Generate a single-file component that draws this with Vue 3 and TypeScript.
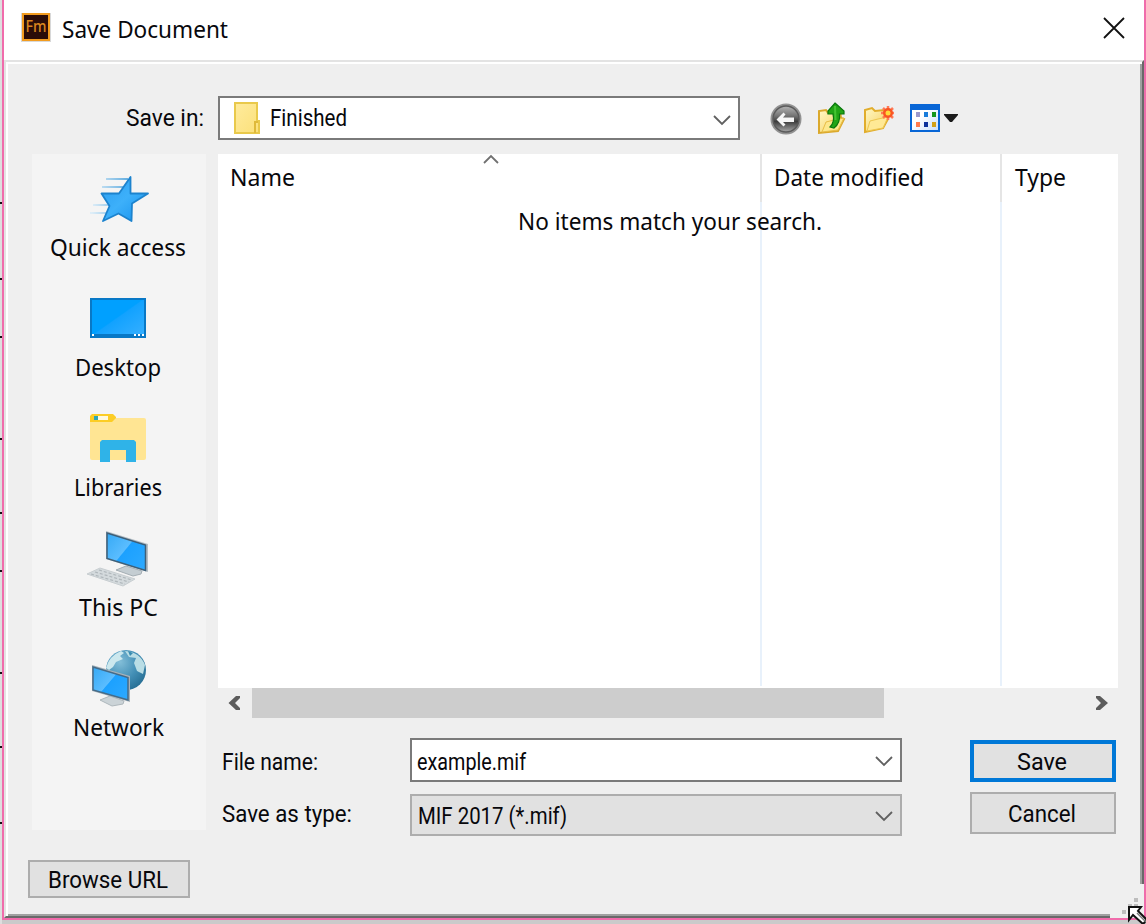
<script setup lang="ts">
import { h, ref } from 'vue'

interface LabelProps {
  text: string
  width: number
}

// Single line of text fitted to a given width, baseline 24px below its top
const Label = (props: LabelProps) =>
  h('svg', { class: 'label', width: props.width, height: 32 }, [
    h('text', { x: 0, y: 24, textLength: props.width, lengthAdjust: 'spacingAndGlyphs' }, props.text),
  ])
Label.props = ['text', 'width']

const places = [
  { id: 'quick', name: 'Quick access', width: 136 },
  { id: 'desktop', name: 'Desktop', width: 86 },
  { id: 'libraries', name: 'Libraries', width: 88 },
  { id: 'pc', name: 'This PC', width: 79 },
  { id: 'network', name: 'Network', width: 91 },
]

const columns = [
  { name: 'Name', width: 65, sorted: true },
  { name: 'Date modified', width: 150, sorted: false },
  { name: 'Type', width: 51, sorted: false },
]

const ticks = [202, 278, 336, 438, 512, 570, 672, 746, 822]
const folder = ref('Finished')
const fileName = ref('example.mif')
const fileType = ref('MIF 2017 (*.mif)')
</script>

<template>
  <div class="screen">
    <svg class="edge" width="2" height="924">
      <rect v-for="y in ticks" :key="y" x="0" :y="y" width="2" height="2" fill="#111" />
    </svg>
    <div class="dialog">
      <header class="titlebar">
        <svg class="app-icon" width="32" height="32" viewBox="0 0 32 32">
          <rect x="0" y="1" width="30" height="29" fill="#d8d8d8" />
          <rect x="1" y="1" width="28" height="28" fill="#f29c1f" />
          <rect x="3" y="3" width="24" height="24" fill="#2b0d08" />
          <text x="4.500" y="20" textLength="21" lengthAdjust="spacingAndGlyphs" class="app-letters">Fm</text>
        </svg>
        <Label class="wide" text="Save Document" :width="166" />
        <button class="close" aria-label="Close">
          <svg width="22" height="22" viewBox="0 0 22 22"><path d="M1 1 21 21M21 1 1 21" stroke="#111" stroke-width="1.8" fill="none" /></svg>
        </button>
      </header>

      <div class="client">
        <div class="toolbar">
          <div class="save-in"><Label text="Save in:" :width="78" /></div>
          <div class="combo folder-combo">
            <svg width="28" height="34" viewBox="0 0 28 34">
              <defs><linearGradient id="fold" x2="1" y2="1"><stop stop-color="#ffeb9c" /><stop offset="1" stop-color="#fbe07a" /></linearGradient></defs>
              <path d="M1 1H23V19H25V31H1Z" fill="url(#fold)" stroke="#e9c94b" stroke-width="2" />
              <path d="M21 31V20H24" fill="none" stroke="#dfb93a" stroke-width="2" />
            </svg>
            <Label :text="folder" :width="77" />
            <svg class="chevron" width="18" height="12" viewBox="0 0 18 12"><path d="M1 2 9 10 17 2" /></svg>
          </div>
          <div class="tools">
            <svg width="32" height="34" viewBox="0 0 32 34">
              <defs>
                <linearGradient id="ball" x2="0" y2="1"><stop stop-color="#b4b4b4" /><stop offset=".38" stop-color="#747474" /><stop offset=".6" stop-color="#3d3d3d" /><stop offset="1" stop-color="#a8a8a8" /></linearGradient>
              </defs>
              <circle cx="16" cy="17" r="15.5" fill="#929292" />
              <circle cx="16" cy="17" r="13" fill="url(#ball)" stroke="#5b5b5b" stroke-width="1.5" />
              <path d="M6.5 17.5 13.5 10.5 15.5 12.5 13 15.5H24V20H13L15.5 22.5 13.5 24.5Z" fill="#f6f6f6" />
            </svg>
            <svg class="up" width="28" height="34" viewBox="0 0 28 34">
              <defs><linearGradient id="paper" x2="1" y2="1"><stop stop-color="#fff8c8" /><stop offset="1" stop-color="#f5cd55" /></linearGradient></defs>
              <path d="M1 31V9L8 8 10 11 22 9 23 16 26 17 20 29Z" fill="url(#paper)" stroke="#dba92c" stroke-width="2" />
              <path d="M4 30 8 20 16 18 26 16 20 28Z" fill="#fde88d" stroke="#e8bd47" />
              <path d="M17 1 26 9 26 12H21.500Q22.500 21 16 26L12 25Q17 20 15 12H10V9Z" fill="#22a516" stroke="#08770c" stroke-width="1.2" />
              <path d="M17 4 17.500 18" stroke="#45c433" stroke-width="2" />
            </svg>
            <svg class="new" width="30" height="34" viewBox="0 0 30 34">
              <path d="M1 30V8L8 6 11 9 20 8 22 15 24 17 19 26Z" fill="url(#paper)" stroke="#e1ad2c" stroke-width="2" />
              <path d="M3 29 6 19 14 17 24 15 19 26Z" fill="#ffe995" stroke="#edc64f" />
              <path d="M24 4V18M17 11H31M19 6 29 16M29 6 19 16" stroke="#ff7956" stroke-width="2.500" />
              <circle cx="24" cy="11" r="5" fill="#f95522" /><circle cx="24" cy="11" r="2.500" fill="#ffd93b" />
            </svg>
            <svg class="view" width="30" height="34" viewBox="0 0 30 34">
              <defs><linearGradient id="win" x2="1" y2="1"><stop offset=".4" stop-color="#fff" /><stop offset="1" stop-color="#c3dbfb" /></linearGradient></defs>
              <path d="M1 3H29V29H1Z" fill="url(#win)" stroke="#0866d6" stroke-width="2" />
              <path d="M0 4 2 2H28L30 4V8H0Z" fill="#0866d6" />
              <path d="M6 10h4v5H6z" fill="#9b99cc" /><path d="M14 10h4v5h-4z" fill="#187cda" /><path d="M22 10h4v5h-4z" fill="#16971c" />
              <path d="M6 20h4v5H6z" fill="#ff7a4c" /><path d="M14 20h4v5h-4z" fill="#0b319c" /><path d="M22 20h4v5h-4z" fill="#d1a018" />
            </svg>
            <svg class="drop" width="14" height="8" viewBox="0 0 14 8"><path d="M0 0H14V1L8 8H6L0 1Z" fill="#1b1b1b" /></svg>
          </div>
        </div>

        <div class="content">
          <nav class="places">
            <div v-for="p in places" :key="p.id" class="place">
              <svg v-if="p.id === 'quick'" width="64" height="64" viewBox="0 0 64 64">
                <defs>
                  <linearGradient id="star" x2="1" y2="1"><stop stop-color="#2a9df0" /><stop offset=".5" stop-color="#3db0fa" /><stop offset="1" stop-color="#1590ec" /></linearGradient>
                  <linearGradient id="trail" gradientUnits="userSpaceOnUse" x1="6" y1="0" x2="40" y2="0"><stop stop-color="#d6ebf8" /><stop offset="1" stop-color="#3f9cdb" /></linearGradient>
                </defs>
                <path d="M20 11H42M16 19H37M7 37H25M4 45H22" stroke="url(#trail)" stroke-width="1.600" />
                <path d="M44.500 9V25.500H62L46 35.500 45.500 53 32.500 45.500 17 53 23.500 38 15.500 25.500H33Z" fill="url(#star)" stroke="#1c83ce" stroke-width="1.800" stroke-linejoin="round" />
              </svg>
              <svg v-else-if="p.id === 'desktop'" width="64" height="64" viewBox="0 0 64 64">
                <defs><linearGradient id="desk" x2="1" y2="1"><stop offset=".48" stop-color="#00a0ff" /><stop offset=".5" stop-color="#12a2ff" /><stop offset="1" stop-color="#38b0ff" /></linearGradient></defs>
                <rect x="5" y="11" width="54" height="38" fill="url(#desk)" stroke="#0878c6" stroke-width="2" />
                <rect x="4" y="46" width="56" height="4" fill="#0878c6" />
                <path d="M6 46h2v2H6zM48 46h2v2h-2zM52 46h2v2h-2zM56 46h2v2h-2z" fill="#fff" />
              </svg>
              <svg v-else-if="p.id === 'libraries'" width="64" height="64" viewBox="0 0 64 64">
                <path d="M4 10H58Q60 10 60 12V50Q60 52 58 52H6Q4 52 4 50Z" fill="#ffe593" />
                <path d="M6 6H27L30 9V10L26 14H4V8Z" fill="#fccd25" />
                <rect x="8" y="8" width="14" height="4" fill="#fff9dc" /><rect x="8" y="8" width="4" height="4" fill="#2da6b5" />
                <path d="M16 32H48L50 34V54H40V42H24V54H14V34Z" fill="#2fb3e8" />
              </svg>
              <svg v-else-if="p.id === 'pc'" width="64" height="64" viewBox="0 0 64 64">
                <defs><linearGradient id="scr" x2="1" y2=".8"><stop stop-color="#35a9f5" /><stop offset=".5" stop-color="#5bbdff" /><stop offset=".52" stop-color="#1ca1ff" /><stop offset="1" stop-color="#2aa8ff" /></linearGradient></defs>
                <path d="M30 42 40 38 56 43 55 46 47 48Z" fill="#c4cdd2" stroke="#a4aeb4" />
                <path d="M1 46 14 40 49 51 37 58Z" fill="#d4dadd" stroke="#c8ced1" />
                <path d="M5 46 39 56M9 44 43 54M13 42 46 52" stroke="#b0b7bb" stroke-width="1.200" stroke-dasharray="3 2" />
                <path d="M20 3 62 16V44L20 31Z" fill="#b5bec4" />
                <path d="M21 5 59.500 17V42.500L21 30.500Z" fill="url(#scr)" stroke="#3e5f78" stroke-width="1.500" />
              </svg>
              <svg v-else width="64" height="64" viewBox="0 0 64 64">
                <defs><radialGradient id="globe" cx=".35" cy=".3" r=".8"><stop stop-color="#83bed8" /><stop offset=".55" stop-color="#438fb6" /><stop offset="1" stop-color="#246b90" /></radialGradient></defs>
                <circle cx="40" cy="22" r="20" fill="url(#globe)" />
                <path d="M20 20Q23 8 35 3L38 5 34 8 37 11 30 14 27 19 23 22Z" fill="#cce8ee" />
                <path d="M39 3Q54 4 59 17L57 26 51 23 48 15 50 10 43 9Z" fill="#b9dde5" />
                <path d="M42 3 47 5 44 8Z" fill="#398cb1" />
                <path d="M14 52 24 48 38 53 37 56 26 58Z" fill="#cbd3d7" stroke="#aeb7bc" />
                <path d="M6 17 44 28V54L6 43Z" fill="#a8b2b8" />
                <path d="M7 19 42 29.500V52L7 42Z" fill="url(#scr)" stroke="#456b88" stroke-width="1.500" />
              </svg>
              <Label class="wide" :text="p.name" :width="p.width" />
            </div>
          </nav>

          <div class="main">
            <div class="list">
              <div class="head">
                <div v-for="c in columns" :key="c.name" class="cell">
                  <Label class="wide" :text="c.name" :width="c.width" />
                  <svg v-if="c.sorted" class="sort" width="16" height="10" viewBox="0 0 16 10"><path d="M1 9 8 2 15 9" stroke="#707070" stroke-width="1.800" fill="none" /></svg>
                </div>
              </div>
              <div class="rows"><Label class="wide" text="No items match your search." :width="304" /></div>
            </div>
            <div class="scrollbar">
              <svg width="34" height="30" viewBox="0 0 34 30"><path d="M18 8H22V10L17 15 22 20V22H18L10.500 15Z" fill="#5c5c5c" /></svg>
              <div class="thumb"></div>
              <svg width="34" height="30" viewBox="0 0 34 30"><path d="M12 8H16L24 15 16 22H12V20L17 15 12 10Z" fill="#5c5c5c" /></svg>
            </div>
            <div class="form">
              <div class="captions">
                <Label text="File name:" :width="96" />
                <Label text="Save as type:" :width="130" />
              </div>
              <div class="fields">
                <div class="combo name-combo">
                  <Label :text="fileName" :width="109" />
                  <svg class="chevron" width="18" height="12" viewBox="0 0 18 12"><path d="M1 2 9 10 17 2" /></svg>
                </div>
                <div class="combo type-combo">
                  <Label :text="fileType" :width="149" />
                  <svg class="chevron" width="18" height="12" viewBox="0 0 18 12"><path d="M1 2 9 10 17 2" /></svg>
                </div>
              </div>
              <div class="actions">
                <button class="btn primary"><Label text="Save" :width="50" /></button>
                <button class="btn"><Label text="Cancel" :width="68" /></button>
              </div>
            </div>
          </div>
        </div>
        <button class="btn browse"><Label text="Browse URL" :width="120" /></button>
      </div>
    </div>

    <svg class="grip" width="36" height="40" viewBox="0 0 36 40">
      <path d="M0 0H34V34H0Z" fill="#efefef" />
      <path d="M24 14h4v4h-4zM18 20h4v4h-4zM24 20h4v4h-4zM12 26h4v4h-4z" fill="#bdbdbd" />
      <path d="M34 0h2v36H0v-2h34z" fill="#f06cab" />
      <path d="M0 36h36v4H0z" fill="#cacaca" />
      <path d="M19 23H31L28 27 37 36 33 40 23 31 19 36Z" fill="#fff" stroke="#111" stroke-width="2" />
      <path d="M27 29 37 39" stroke="#777" stroke-width="1.500" />
    </svg>
  </div>
</template>

<style>
body { margin: 0; overflow: hidden; }
</style>

<style scoped>
* { box-sizing: border-box; }
svg { display: block; flex: none; }
.screen {
  position: relative;
  display: flex;
  width: 1146px;
  height: 924px;
  overflow: hidden;
  background: #cacaca;
}
.edge { background: #dedede; }
.dialog {
  display: flex;
  flex-direction: column;
  width: 1144px;
  height: 920px;
  border: solid #f06cab;
  border-width: 0 2px 2px;
  background: #efefef;
}
.label {
  overflow: visible;
  fill: #08080c;
  font: 24px Roboto, "Liberation Sans", sans-serif;
}
.label.wide { font-family: "Noto Sans", "Open Sans", sans-serif; }
.titlebar {
  display: flex;
  align-items: flex-start;
  height: 60px;
  padding: 12px 0 0 17px;
  background: #fff;
}
.titlebar .label { margin: 2px 0 0 9px; }
.app-letters { font: 500 17px "Noto Sans", sans-serif; fill: #d9861f; }
.close {
  margin: 5px 19px 0 auto;
  padding: 0;
  border: 0;
  background: none;
}
.client {
  height: 858px;
  padding: 34px 0 0 26px;
  border-style: solid;
  border-width: 2px;
  border-color: #e3e3e3 #696969 #696969 #e3e3e3;
  box-shadow: inset 2px 2px #fff, inset -2px -2px #a0a0a0;
}
.toolbar { display: flex; height: 44px; }
.save-in {
  display: flex;
  justify-content: flex-end;
  width: 186px;
  padding: 6px 14px 0 0;
}
.combo {
  display: flex;
  border: 2px solid #7a7a7a;
  background: #fff;
}
.chevron {
  align-self: center;
  margin: 2px 7px 0 auto;
  fill: none;
  stroke: #606060;
  stroke-width: 1.8;
}
.folder-combo { width: 522px; padding: 4px 0 0 14px; }
.folder-combo .label { margin-left: 8px; }
.folder-combo .chevron { margin-top: -1px; }
.tools { display: flex; margin: 6px 0 0 30px; }
.up { margin-left: 16px; }
.new { margin-left: 18px; }
.view { margin-left: 16px; }
.drop { margin: 12px 0 0 4px; }
.content { display: flex; gap: 12px; margin-top: 14px; }
.places {
  width: 174px;
  height: 676px;
  padding: 14px 2px 0 0;
  background: #f4f4f4;
}
.place {
  display: flex;
  flex-direction: column;
  align-items: center;
  height: 120px;
}
.main { width: 900px; }
.list { height: 534px; background: #fff; }
.head { display: grid; grid-template-columns: 544px 240px 116px; height: 48px; }
.cell {
  position: relative;
  padding: 8px 0 0 12px;
  border-right: 2px solid #e5e5e5;
}
.cell:last-child { padding-left: 13px; border-right: 0; }
.sort { position: absolute; left: 265px; top: 0; }
.rows {
  display: flex;
  justify-content: center;
  height: 484px;
  padding: 4px 0 0 4px;
  background:
    linear-gradient(#e8f1fb, #e8f1fb) 542px 0 / 2px 100% no-repeat,
    linear-gradient(#e8f1fb, #e8f1fb) 782px 0 / 2px 100% no-repeat;
}
.scrollbar { display: flex; height: 30px; }
.thumb { width: 632px; margin-right: 200px; background: #cdcdcd; }
.form { display: flex; margin-top: 20px; }
.captions {
  display: flex;
  flex-direction: column;
  gap: 20px;
  width: 192px;
  padding: 8px 0 0 4px;
}
.fields { display: flex; flex-direction: column; gap: 12px; width: 492px; }
.name-combo { height: 44px; padding: 6px 0 0 5px; }
.type-combo {
  height: 42px;
  padding: 4px 0 0 6px;
  border-color: #adadad;
  background: #e1e1e1;
}
.name-combo .chevron { margin-top: -4px; }
.type-combo .chevron { margin-top: -2px; }
.actions {
  display: flex;
  flex-direction: column;
  gap: 10px;
  width: 146px;
  margin: 2px 0 0 68px;
}
.btn {
  display: flex;
  justify-content: center;
  height: 42px;
  padding: 4px 2px 0 0;
  border: 2px solid #adadad;
  border-radius: 0;
  background: #e1e1e1;
}
.btn.primary { padding-top: 2px; border: 4px solid #0078d7; }
.btn.browse {
  width: 162px;
  height: 38px;
  margin: 24px 0 0 -4px;
  padding-top: 2px;
}
.grip { position: absolute; left: 1110px; top: 884px; }
</style>
